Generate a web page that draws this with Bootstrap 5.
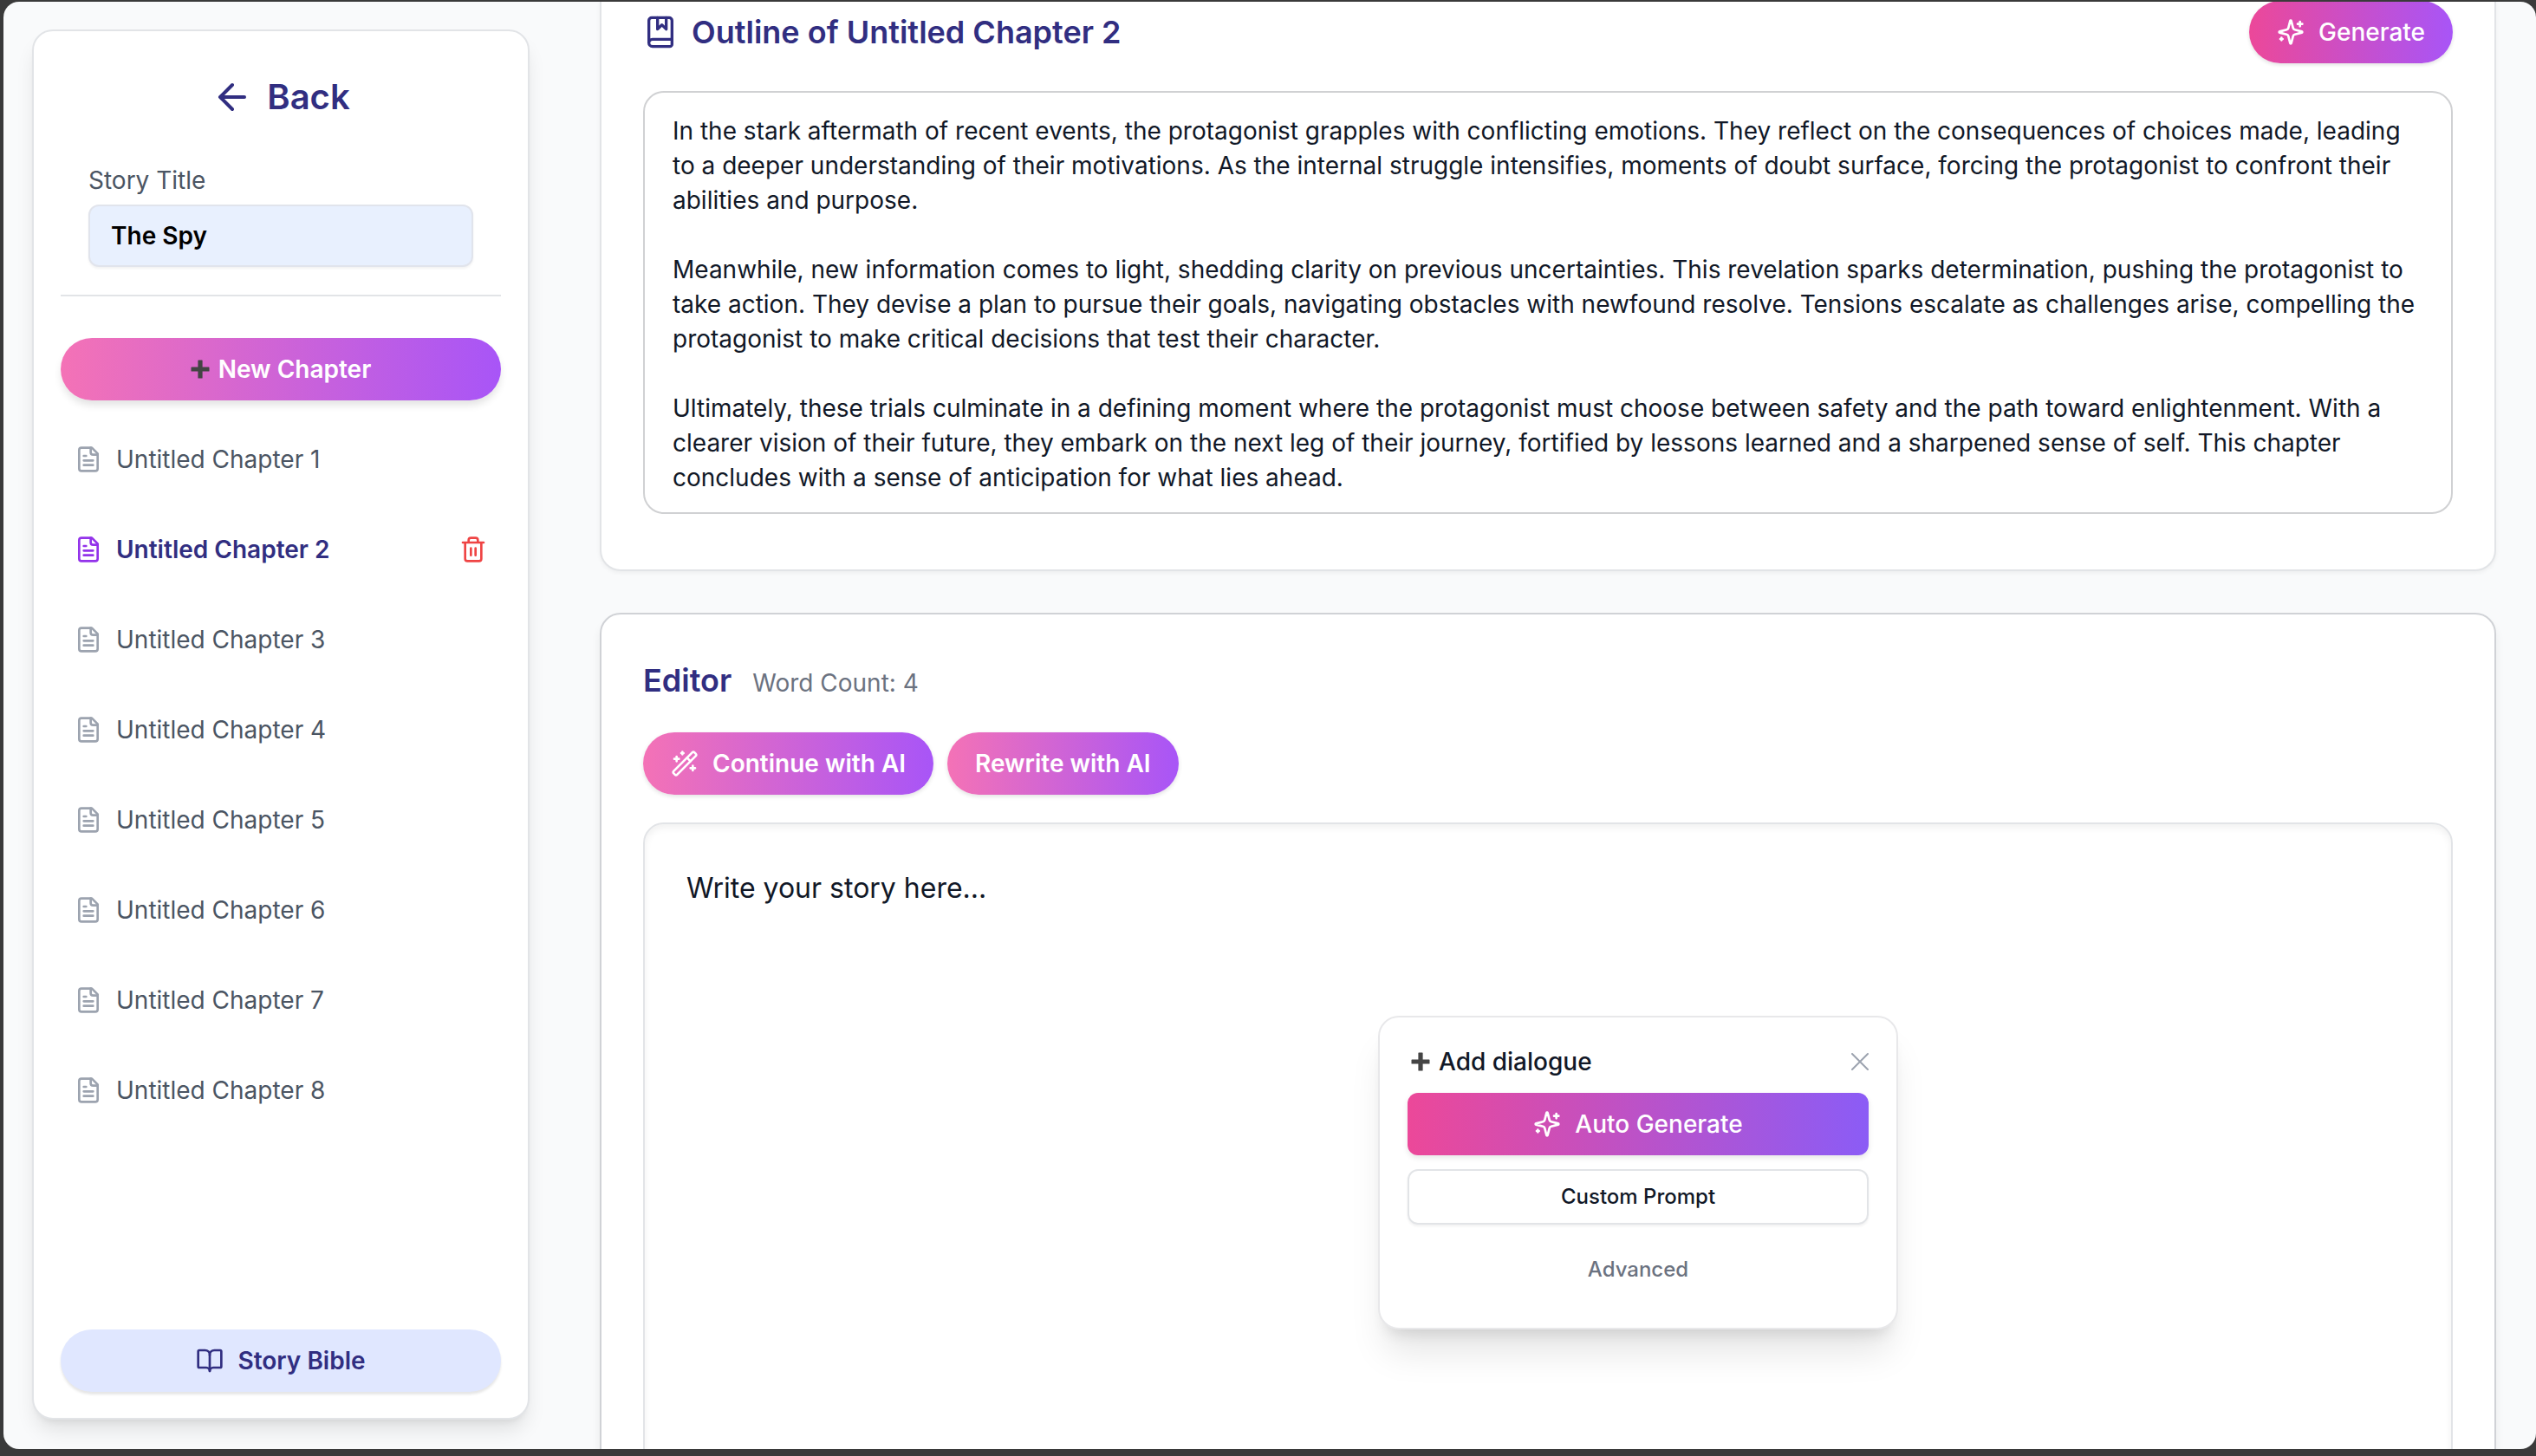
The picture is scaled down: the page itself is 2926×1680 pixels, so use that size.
<!DOCTYPE html>
<html lang="en">
<head>
<meta charset="utf-8">
<meta name="viewport" content="width=device-width, initial-scale=1">
<title>The Spy – Untitled Chapter 2</title>
<link rel="stylesheet" href="https://cdn.jsdelivr.net/npm/bootstrap@5.3.0/dist/css/bootstrap.min.css">
<style>
:root { --indigo: #312e81; --line: #e2e4e7; --ink: #111827; }
body { background: #3a3a3a; font-family: Inter, "Liberation Sans", sans-serif; font-size: 28px; line-height: 40px; color: var(--ink); }
svg { flex: none; fill: none; stroke: currentColor; stroke-width: 2; stroke-linecap: round; stroke-linejoin: round; }
.ico { width: 32px; height: 32px; }
.ico-plus { width: 22px; height: 22px; stroke: none; fill: #444; margin-right: 10px; }

.app-frame { height: calc(100vh - 10px); margin: 2px 0 8px 4px; padding: 0 46px 0 33px; gap: 81px; border-radius: 18px; background: #f9fafb; }
.app-frame .btn { font-size: 28px; line-height: 40px; height: 72px; padding: 0 32px; gap: 16px; border: 0; display: inline-flex; align-items: center; justify-content: center; }

.side-panel { flex: 0 0 574px; margin: 32px 0 34px; padding: 48px 31px 30px; background: #fff; border: 2px solid var(--line); border-radius: 24px; box-shadow: 0 16px 25px -5px rgba(0,0,0,.11), 0 6px 10px -6px rgba(0,0,0,.1); }
.back-link { gap: 16px; font-size: 40px; line-height: 56px; font-weight: 600; color: var(--indigo); }
.back-link svg { width: 48px; height: 48px; }
.title-block { padding: 48px 32px 32px; border-bottom: 2px solid var(--line); }
.title-block label { color: #4b5563; }
.title-block .form-control { height: 72px; padding: 0 24px; font-size: 28px; line-height: 40px; font-weight: 600; color: #000; background: #e8f0fe; border: 2px solid #e1e4ec; border-radius: 12px; box-shadow: 0 2px 3px rgba(0,0,0,.05); }

.app-frame .btn-soft-grad { background: linear-gradient(90deg, #f472b6, #a855f7); color: #fff; font-weight: 600; box-shadow: 0 2px 5px rgba(0,0,0,.12); }
.app-frame .btn-new { gap: 0; margin-top: 48px; box-shadow: 0 6px 10px -1px rgba(0,0,0,.12); }
.app-frame .btn-hot-grad { background: linear-gradient(90deg, #ec4899, #a855f7); color: #fff; font-weight: 500; box-shadow: 0 2px 4px rgba(0,0,0,.12); }
.app-frame .btn-bible { background: #e0e7ff; color: var(--indigo); font-weight: 600; box-shadow: 0 3px 3px rgba(0,0,0,.1); }

.chapters { margin-top: 32px; gap: 32px; }
.chapters li { height: 72px; padding: 0 16px; }
.chapters a { gap: 16px; color: #4b5563; }
.chapters a svg { color: #9ca3af; }
.chapters .current a { color: var(--indigo); font-weight: 600; }
.chapters .current a svg { color: #9333ea; }
.app-frame .btn-trash { width: 32px; height: 32px; padding: 0; color: #ef4444; }

.main-pane { margin-top: -1px; }
.sheet { background: #fff; border: 2px solid var(--line); border-radius: 24px; padding: 48px; box-shadow: 0 2px 5px rgba(0,0,0,.05); }
.sheet h2 { margin: 0; font-size: 36px; line-height: 56px; font-weight: 600; color: var(--indigo); }
.sheet-outline { border-top: 0; border-radius: 0 0 24px 24px; padding-top: 0; padding-bottom: 64px; }
.sheet-outline h2 { gap: 16px; }
.sheet-outline h2 svg { width: 40px; height: 40px; }
.sheet-editor { margin-top: 48px; border-color: #d0d2d6; box-shadow: 0 8px 12px -1px rgba(0,0,0,.08); }
.sheet-gap { margin-top: 32px; }
.outline-text { padding: 24px 32px 20px; font-size: 28px; line-height: 40px; color: var(--ink); border: 2px solid #d0d1d3; border-radius: 24px; resize: none; overflow: hidden; display: block; }
.story-text { height: 900px; padding: 48px; font-size: 32px; line-height: 52px; color: var(--ink); border: 2px solid var(--line); border-radius: 24px; resize: none; box-shadow: inset 0 4px 8px rgba(0,0,0,.06); }
.word-count { color: #6b7280; }

.dialogue-pop { left: 848px; top: 223px; width: 600px; padding: 31px 32px; background: #fff; border: 2px solid #e8e8ea; border-radius: 24px; box-shadow: 0 34px 42px -8px rgba(0,0,0,.1), 0 14px 17px -10px rgba(0,0,0,.12); gap: 16px; }
.pop-title { padding-left: 4px; font-weight: 500; height: 40px; }
.app-frame .btn-x { width: 20px; height: 20px; padding: 0; color: #9ca3af; }
.btn-x svg { width: 20px; height: 20px; }
.app-frame .btn-auto { background: linear-gradient(90deg, #ec4899, #8b5cf6); color: #fff; font-weight: 500; border-radius: 12px; box-shadow: 0 3px 6px rgba(0,0,0,.1); }
.app-frame .btn-custom { height: 64px; font-size: 24px; font-weight: 500; color: var(--ink); border: 2px solid var(--line); border-radius: 12px; box-shadow: 0 2px 3px rgba(0,0,0,.06); }
.app-frame .btn-adv { font-size: 24px; font-weight: 500; color: #6b7280; }
</style>
<script src="https://cdn.jsdelivr.net/npm/bootstrap@5.3.0/dist/js/bootstrap.bundle.min.js"></script>
</head>
<body class="overflow-hidden">
<svg class="d-none" aria-hidden="true">
  <symbol id="i-file" viewBox="0 0 24 24"><path d="M15 2H6a2 2 0 0 0-2 2v16a2 2 0 0 0 2 2h12a2 2 0 0 0 2-2V7Z"/><path d="M14 2v4a2 2 0 0 0 2 2h4"/><path d="M10 9H8M16 13H8M16 17H8"/></symbol>
  <symbol id="i-sparkles" viewBox="0 0 24 24"><path d="M9.937 15.5A2 2 0 0 0 8.5 14.063l-6.135-1.582a.5.5 0 0 1 0-.962L8.5 9.936A2 2 0 0 0 9.937 8.5l1.582-6.135a.5.5 0 0 1 .963 0L14.063 8.5A2 2 0 0 0 15.5 9.937l6.135 1.581a.5.5 0 0 1 0 .964L15.5 14.063a2 2 0 0 0-1.437 1.437l-1.582 6.135a.5.5 0 0 1-.963 0z"/><path d="M20 3v4M22 5h-4M4 17v2M5 18H3"/></symbol>
  <symbol id="i-plus" viewBox="0 0 22 22"><path d="M9 0.5h4a.6.6 0 0 1 .6.6V8.4h7.300a.6.6 0 0 1 .6.6v4a.6.6 0 0 1-.6.6H13.600v7.300a.6.6 0 0 1-.6.6H9a.6.6 0 0 1-.6-.6V13.600H1.100a.6.6 0 0 1-.6-.6V9a.6.6 0 0 1 .6-.6H8.400V1.100A.6.6 0 0 1 9 .5z"/></symbol>
</svg>

<div class="app-frame d-flex overflow-hidden">
  <aside class="side-panel d-flex flex-column">
    <a href="#" class="back-link d-flex align-items-center justify-content-center text-decoration-none">
      <svg viewBox="0 0 24 24"><path d="m12 19-7-7 7-7M19 12H5"/></svg>Back
    </a>
    <div class="title-block">
      <label for="storyTitle" class="d-block mb-2">Story Title</label>
      <input id="storyTitle" type="text" class="form-control" value="The Spy">
    </div>
    <button type="button" class="btn btn-soft-grad btn-new rounded-pill w-100"><svg class="ico-plus"><use href="#i-plus"/></svg>New Chapter</button>
    <ul class="chapters list-unstyled d-flex flex-column mb-0">
      <li class="d-flex align-items-center"><a href="#" class="d-flex align-items-center text-decoration-none"><svg class="ico"><use href="#i-file"/></svg>Untitled Chapter 1</a></li>
      <li class="current d-flex align-items-center justify-content-between"><a href="#" class="d-flex align-items-center text-decoration-none" aria-current="page"><svg class="ico"><use href="#i-file"/></svg>Untitled Chapter 2</a>
        <button type="button" class="btn btn-trash" aria-label="Delete chapter"><svg class="ico" viewBox="0 0 24 24"><path d="M3 6h18M19 6v14a2 2 0 0 1-2 2H7a2 2 0 0 1-2-2V6M8 6V4a2 2 0 0 1 2-2h4a2 2 0 0 1 2 2v2M10 11v6M14 11v6"/></svg></button></li>
      <li class="d-flex align-items-center"><a href="#" class="d-flex align-items-center text-decoration-none"><svg class="ico"><use href="#i-file"/></svg>Untitled Chapter 3</a></li>
      <li class="d-flex align-items-center"><a href="#" class="d-flex align-items-center text-decoration-none"><svg class="ico"><use href="#i-file"/></svg>Untitled Chapter 4</a></li>
      <li class="d-flex align-items-center"><a href="#" class="d-flex align-items-center text-decoration-none"><svg class="ico"><use href="#i-file"/></svg>Untitled Chapter 5</a></li>
      <li class="d-flex align-items-center"><a href="#" class="d-flex align-items-center text-decoration-none"><svg class="ico"><use href="#i-file"/></svg>Untitled Chapter 6</a></li>
      <li class="d-flex align-items-center"><a href="#" class="d-flex align-items-center text-decoration-none"><svg class="ico"><use href="#i-file"/></svg>Untitled Chapter 7</a></li>
      <li class="d-flex align-items-center"><a href="#" class="d-flex align-items-center text-decoration-none"><svg class="ico"><use href="#i-file"/></svg>Untitled Chapter 8</a></li>
    </ul>
    <button type="button" class="btn btn-bible rounded-pill w-100 mt-auto">
      <svg class="ico" viewBox="0 0 24 24"><path d="M12 7v14"/><path d="M3 18a1 1 0 0 1-1-1V4a1 1 0 0 1 1-1h5a4 4 0 0 1 4 4 4 4 0 0 1 4-4h5a1 1 0 0 1 1 1v13a1 1 0 0 1-1 1h-6a3 3 0 0 0-3 3 3 3 0 0 0-3-3z"/></svg>Story Bible
    </button>
  </aside>

  <main class="main-pane flex-grow-1">
    <section class="sheet sheet-outline">
      <div class="d-flex align-items-center justify-content-between">
        <h2 class="d-flex align-items-center"><svg viewBox="0 0 24 24"><path d="M4 19.500V4a2 2 0 0 1 2-2h12a2 2 0 0 1 2 2v16.500a1.500 1.500 0 0 1-1.500 1.500H6.500a2.500 2.500 0 0 1 0-5H20"/><path d="M10 2v8l3-3 3 3V2"/></svg>Outline of Untitled Chapter 2</h2>
        <button type="button" class="btn btn-hot-grad rounded-pill"><svg class="ico"><use href="#i-sparkles"/></svg>Generate</button>
      </div>
      <textarea class="outline-text form-control sheet-gap" rows="11" aria-label="Chapter outline" spellcheck="false">In the stark aftermath of recent events, the protagonist grapples with conflicting emotions. They reflect on the consequences of choices made, leading to a deeper understanding of their motivations. As the internal struggle intensifies, moments of doubt surface, forcing the protagonist to confront their abilities and purpose.

Meanwhile, new information comes to light, shedding clarity on previous uncertainties. This revelation sparks determination, pushing the protagonist to take action. They devise a plan to pursue their goals, navigating obstacles with newfound resolve. Tensions escalate as challenges arise, compelling the protagonist to make critical decisions that test their character.

Ultimately, these trials culminate in a defining moment where the protagonist must choose between safety and the path toward enlightenment. With a clearer vision of their future, they embark on the next leg of their journey, fortified by lessons learned and a sharpened sense of self. This chapter concludes with a sense of anticipation for what lies ahead.</textarea>
    </section>

    <section class="sheet sheet-editor">
      <div class="d-flex align-items-baseline gap-4">
        <h2>Editor</h2>
        <span class="word-count">Word Count: 4</span>
      </div>
      <div class="d-flex gap-3 sheet-gap">
        <button type="button" class="btn btn-soft-grad rounded-pill"><svg class="ico" viewBox="0 0 24 24"><path d="m21.640 3.640-1.280-1.280a1.210 1.210 0 0 0-1.720 0L2.360 18.640a1.210 1.210 0 0 0 0 1.720l1.280 1.280a1.200 1.200 0 0 0 1.720 0L21.640 5.360a1.200 1.200 0 0 0 0-1.720"/><path d="m14 7 3 3M5 6v4M19 14v4M10 2v2M7 8H3M21 16h-4M11 3H9"/></svg>Continue with AI</button>
        <button type="button" class="btn btn-soft-grad rounded-pill">Rewrite with AI</button>
      </div>
      <div class="position-relative sheet-gap">
        <textarea class="story-text form-control" aria-label="Story" spellcheck="false">Write your story here...</textarea>
        <div class="dialogue-pop position-absolute d-flex flex-column" role="dialog" aria-label="Add dialogue">
          <div class="pop-title d-flex align-items-center justify-content-between">
            <span class="d-flex align-items-center"><svg class="ico-plus"><use href="#i-plus"/></svg>Add dialogue</span>
            <button type="button" class="btn btn-x" aria-label="Close"><svg viewBox="0 0 20 20"><path d="M1 1l18 18M19 1 1 19"/></svg></button>
          </div>
          <button type="button" class="btn btn-auto"><svg class="ico"><use href="#i-sparkles"/></svg>Auto Generate</button>
          <button type="button" class="btn btn-custom">Custom Prompt</button>
          <button type="button" class="btn btn-adv">Advanced</button>
        </div>
      </div>
    </section>
  </main>
</div>
</body>
</html>
